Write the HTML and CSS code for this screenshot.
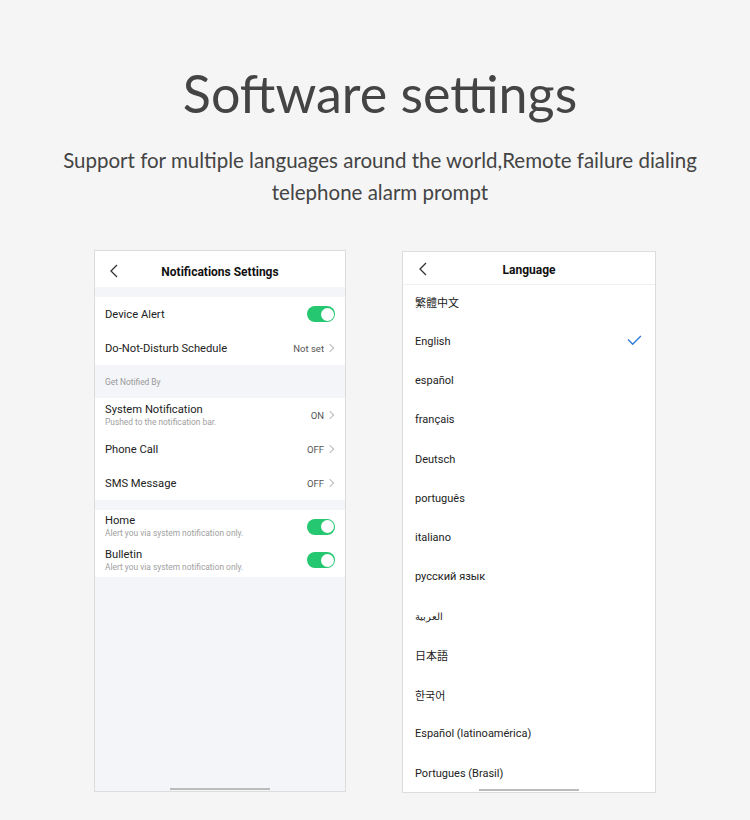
FILE: index.html
```html
<!DOCTYPE html>
<html lang="en">
<head>
<meta charset="UTF-8">
<title>Software settings</title>
<link rel="stylesheet" href="styles.css">
</head>
<body>

<div class="intro">
  <h1>Software settings</h1>
  <p>Support for multiple languages around the world,Remote failure dialing telephone alarm prompt</p>
</div>

<div class="phones">

  <!-- notifications screen -->
  <div class="phone notify">
    <div class="topbar">
      <svg class="back" viewBox="0 0 8 14" width="8" height="14"><polyline points="7,1 1,7 7,13" fill="none" stroke="#333" stroke-width="1.3"/></svg>
      <span class="topbar-title">Notifications Settings</span>
    </div>

    <div class="group first">
      <div class="row">
        <span class="row-title">Device Alert</span>
        <span class="toggle"></span>
      </div>
      <div class="row">
        <span class="row-title">Do-Not-Disturb Schedule</span>
        <span class="value">Not set <i class="chev"></i></span>
      </div>
    </div>

    <div class="section-label">Get Notified By</div>

    <div class="group">
      <div class="row">
        <div>
          <div class="row-title">System Notification</div>
          <div class="row-sub">Pushed to the notification bar.</div>
        </div>
        <span class="value">ON <i class="chev"></i></span>
      </div>
      <div class="row">
        <span class="row-title">Phone Call</span>
        <span class="value">OFF <i class="chev"></i></span>
      </div>
      <div class="row">
        <span class="row-title">SMS Message</span>
        <span class="value">OFF <i class="chev"></i></span>
      </div>
    </div>

    <div class="group spaced">
      <div class="row short">
        <div>
          <div class="row-title">Home</div>
          <div class="row-sub">Alert you via system notification only.</div>
        </div>
        <span class="toggle"></span>
      </div>
      <div class="row short">
        <div>
          <div class="row-title">Bulletin</div>
          <div class="row-sub">Alert you via system notification only.</div>
        </div>
        <span class="toggle"></span>
      </div>
    </div>

    <div class="home-bar"></div>
  </div>

  <!-- language screen -->
  <div class="phone lang">
    <div class="topbar line">
      <svg class="back" viewBox="0 0 8 14" width="8" height="14"><polyline points="7,1 1,7 7,13" fill="none" stroke="#333" stroke-width="1.3"/></svg>
      <span class="topbar-title">Language</span>
    </div>

    <ul class="lang-list">
      <li>繁體中文</li>
      <li>English
        <svg class="check" viewBox="0 0 16 12" width="15" height="11"><polyline points="1,5 6,10 15,1" fill="none" stroke="#2f7bd6" stroke-width="1.5"/></svg>
      </li>
      <li>español</li>
      <li>français</li>
      <li>Deutsch</li>
      <li>português</li>
      <li>italiano</li>
      <li>русский язык</li>
      <li class="arabic">العربية</li>
      <li>日本語</li>
      <li>한국어</li>
      <li>Español (latinoamérica)</li>
      <li>Portugues (Brasil)</li>
    </ul>

    <div class="home-bar"></div>
  </div>

</div>

</body>
</html>
```

FILE: styles.css
```css
body {
  margin: 0;
  background: #f5f5f5;
  font-family: Lato, 'Open Sans', sans-serif;
  color: #444;
}

.intro {
  text-align: center;
  padding: 58px 0 0 10px;
}

.intro h1 {
  margin: 0;
  font-size: 52px;
  font-weight: 400;
  line-height: 70px;
  color: #444;
}

.intro p {
  margin: 16px auto 0;
  width: 680px;
  font-size: 20.5px;
  line-height: 32px;
  color: #444;
}

.phones {
  display: flex;
  justify-content: center;
  align-items: flex-start;
  gap: 56px;
  margin-top: 42px;
}

.phone {
  position: relative;
  box-sizing: border-box;
  height: 542px;
  border: 1px solid #dcdcdc;
  font-family: Roboto, 'Noto Sans', 'Noto Sans CJK JP', sans-serif;
  color: #222;
  overflow: hidden;
}

.notify {
  width: 252px;
  background: #f4f5f8;
}

.lang {
  width: 254px;
  margin-top: 1px;
  background: #fff;
}

.topbar {
  position: relative;
  box-sizing: border-box;
  height: 36px;
  padding-top: 5px;
  background: #fff;
  display: flex;
  align-items: center;
  justify-content: center;
}

.lang .topbar {
  height: 33px;
  padding-top: 3px;
  border-bottom: 1px solid #f0f0f0;
}

.back {
  position: absolute;
  left: 15px;
  top: 50%;
  margin-top: -5px;
}

.lang .back {
  left: 16px;
  margin-top: -6px;
}

.topbar-title {
  font-size: 12px;
  font-weight: 700;
  color: #111;
}

.group {
  background: #fff;
}

.group.first {
  margin-top: 10px;
}

.group.spaced {
  margin-top: 10px;
}

.row {
  height: 34px;
  padding: 0 10px;
  display: flex;
  align-items: center;
  justify-content: space-between;
}

.row.short {
  height: 33.5px;
}

.row-title {
  font-size: 11.2px;
  color: #222;
  line-height: 13px;
}

.row-sub {
  font-size: 8.4px;
  color: #a0a0a0;
  line-height: 12px;
}

.section-label {
  height: 33px;
  line-height: 34px;
  padding-left: 10px;
  font-size: 8.4px;
  color: #999;
}

.value {
  font-size: 9.5px;
  color: #555;
  display: flex;
  align-items: center;
  gap: 3px;
}

.chev {
  display: inline-block;
  width: 5px;
  height: 5px;
  border-top: 1px solid #bbb;
  border-right: 1px solid #bbb;
  transform: rotate(45deg);
  margin-right: 2px;
}

.toggle {
  position: relative;
  width: 28px;
  height: 16px;
  border-radius: 8px;
  background: #25c771;
}

.toggle::after {
  content: '';
  position: absolute;
  right: 1.5px;
  top: 1.5px;
  width: 13px;
  height: 13px;
  border-radius: 50%;
  background: #fff;
}

.lang-list {
  list-style: none;
  margin: 0;
  padding: 0;
}

.lang-list li {
  position: relative;
  height: 39.25px;
  padding: 0 12px 5px;
  box-sizing: border-box;
  display: flex;
  align-items: center;
  font-size: 11px;
  color: #222;
}

.lang-list li.arabic {
  font-size: 10px;
}

.check {
  position: absolute;
  right: 13px;
  top: 11px;
}

.home-bar {
  position: absolute;
  left: 50%;
  bottom: 1px;
  width: 100px;
  height: 2px;
  margin-left: -50px;
  background: #bbb;
}
```
